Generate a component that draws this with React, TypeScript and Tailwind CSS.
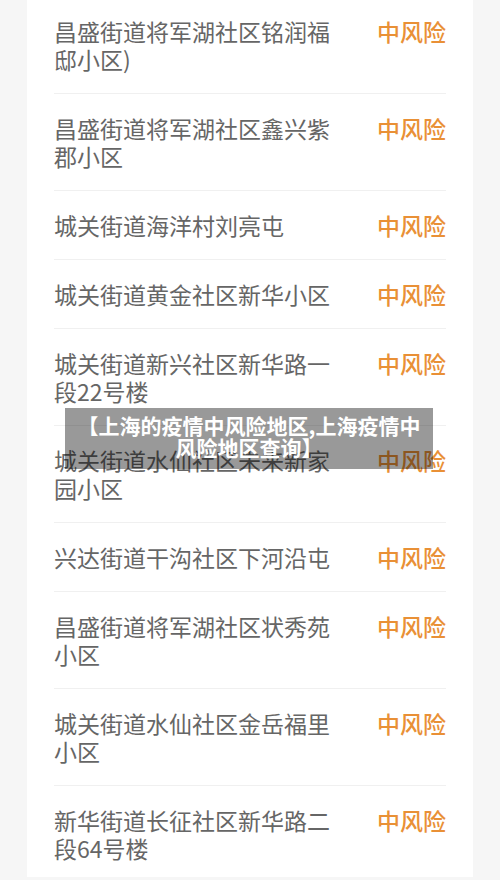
const rows: string[] = [
  "昌盛街道将军湖社区铭润福邸小区)",
  "昌盛街道将军湖社区鑫兴紫郡小区",
  "城关街道海洋村刘亮屯",
  "城关街道黄金社区新华小区",
  "城关街道新兴社区新华路一段22号楼",
  "城关街道水仙社区未来新家园小区",
  "兴达街道干沟社区下河沿屯",
  "昌盛街道将军湖社区状秀苑小区",
  "城关街道水仙社区金岳福里小区",
  "新华街道长征社区新华路二段64号楼",
];

function RiskRow({ name }: { name: string }) {
  return (
    <div className="flex items-start justify-between border-b border-[#f0f0f0] py-[20px]">
      <div className="w-[282px] text-[23px] leading-[28px] text-[#666666]">
        {name}
      </div>
      <div className="text-[23px] leading-[28px] font-medium text-[#e99036]">
        中风险
      </div>
    </div>
  );
}

export default function App() {
  return (
    <div
      className="relative h-[880px] overflow-hidden bg-[#f6f6f6]"
      style={{ fontFamily: '"Noto Sans CJK SC", "Noto Sans", sans-serif' }}
    >
      <div className="mx-[27px] h-full bg-white px-[27px]">
        <div className="-mt-[3px]">
          {rows.map((r) => (
            <RiskRow key={r} name={r} />
          ))}
        </div>
      </div>

      <div className="absolute left-[65px] top-[408px] w-[368px] bg-black/40 px-[10px] pt-[6px] pb-[11px] text-center text-[21px] leading-[22px] font-bold text-white">
        【上海的疫情中风险地区,上海疫情中风险地区查询】
      </div>
    </div>
  );
}
